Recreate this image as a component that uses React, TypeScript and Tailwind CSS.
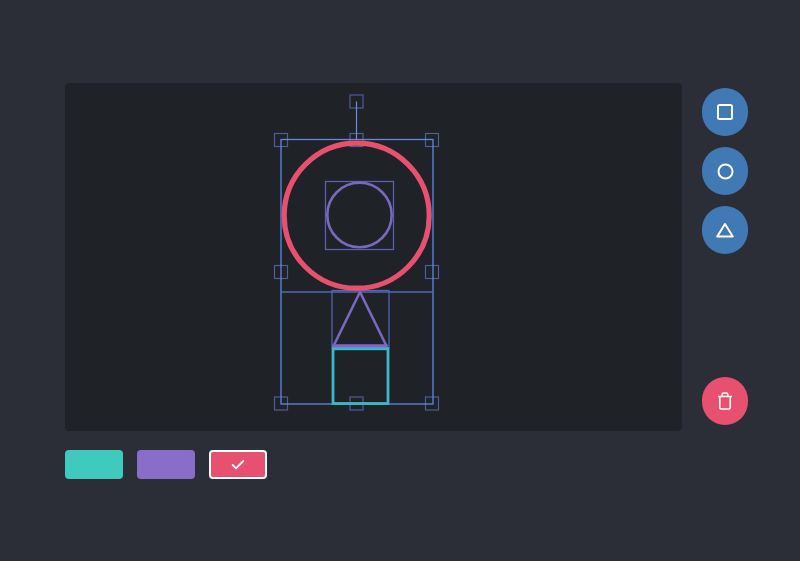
import { Check } from "lucide-react"

const handles = [
  [281, 140],
  [356.5, 140],
  [432, 140],
  [281, 272],
  [432, 272],
  [281, 403.5],
  [356.5, 403.5],
  [432, 403.5],
  [356.5, 101.5],
]

const Stage = () => (
  <svg viewBox="65 83 617 348" className="block h-full w-full" fill="none">
    {handles.map(([x, y]) => (
      <rect key={`${x}-${y}`} x={x - 6.5} y={y - 6.5} width="13" height="13" stroke="#4a5f96" strokeWidth="1.2" />
    ))}
    <path d="M356.5 101.5V140" stroke="#6a8fdc" strokeWidth="1.2" />
    <rect x="281" y="139.5" width="152" height="264.5" stroke="#6289de" strokeWidth="1.3" />
    <path d="M281 292H433" stroke="#5069b4" strokeWidth="1.3" />
    <rect x="325.5" y="181.5" width="68" height="68" stroke="#5a60b4" strokeWidth="1.3" />
    <rect x="332" y="290.5" width="57" height="57" stroke="#4d68b0" strokeWidth="1.3" />
    <circle cx="356.7" cy="215.7" r="72.5" stroke="#e8506f" strokeWidth="5.2" />
    <circle cx="359.5" cy="215" r="32.2" stroke="#7a68bd" strokeWidth="2.6" />
    <path d="M360 292L333.5 346M360 292L386.5 346" stroke="#7a68bd" strokeWidth="2.6" strokeLinecap="round" />
    <path d="M332.5 346H387.5" stroke="#7f66cc" strokeWidth="3.4" />
    <rect x="333" y="348.8" width="55" height="54.7" stroke="#3db8c4" strokeWidth="2.8" />
  </svg>
)

const ToolButton = ({ children, className = "bg-[#4179b5]" }: { children: React.ReactNode; className?: string }) => (
  <button className={`flex h-[48px] w-[46px] items-center justify-center rounded-full text-white ${className}`}>
    {children}
  </button>
)

export default function App() {
  return (
    <div className="flex h-[561px] w-[800px] gap-[20px] bg-[#2b2e37] pl-[65px] pt-[83px]">
      <div className="flex flex-col gap-[19px]">
        <div className="h-[348px] w-[617px] overflow-hidden rounded bg-[#1f2226]">
          <Stage />
        </div>
        <div className="flex gap-[14px]">
          <div className="h-[29px] w-[58px] rounded bg-[#40c9bd]" />
          <div className="h-[29px] w-[58px] rounded bg-[#8a6dc9]" />
          <div className="flex h-[29px] w-[58px] items-center justify-center rounded border-2 border-white bg-[#e8506f] text-white">
            <Check size={16} strokeWidth={2.8} />
          </div>
        </div>
      </div>
      <div className="mt-[5px] flex h-[337px] flex-col gap-[11px]">
        <ToolButton>
          <svg width="16" height="16" viewBox="0 0 16 16" fill="none" stroke="currentColor" strokeWidth="2">
            <rect x="1" y="1" width="14" height="14" rx="1.5" />
          </svg>
        </ToolButton>
        <ToolButton>
          <svg width="17" height="17" viewBox="0 0 17 17" fill="none" stroke="currentColor" strokeWidth="2">
            <circle cx="8.5" cy="8.5" r="7" />
          </svg>
        </ToolButton>
        <ToolButton>
          <svg width="18" height="16" viewBox="0 0 18 16" fill="none" stroke="currentColor" strokeWidth="2" strokeLinejoin="round">
            <path d="M9 2L16.8 14.5H1.2Z" />
          </svg>
        </ToolButton>
        <ToolButton className="mt-auto bg-[#e8506f]">
          <svg width="16" height="18" viewBox="0 0 16 18" fill="none" stroke="currentColor" strokeWidth="1.6">
            <path d="M1 4.5H15M2.8 4.5V15.5Q2.8 17 4.3 17H11.7Q13.2 17 13.2 15.5V4.5M5.2 4.5V2.5Q5.2 1 6.7 1H9.3Q10.8 1 10.8 2.5V4.5" />
          </svg>
        </ToolButton>
      </div>
    </div>
  )
}
